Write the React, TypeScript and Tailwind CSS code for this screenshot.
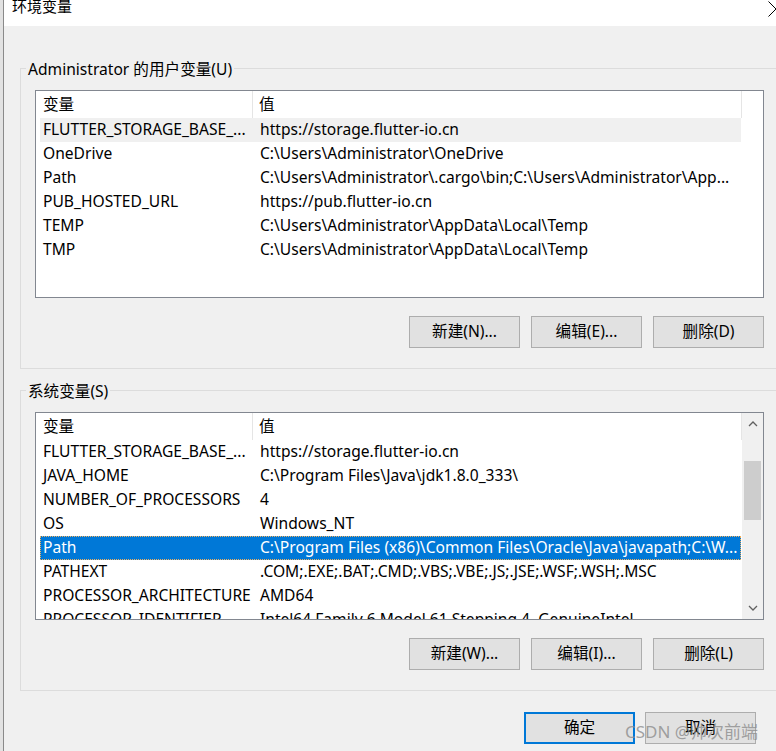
import React from "react";

type Row = [string, string];

const userRows: Row[] = [
  ["FLUTTER_STORAGE_BASE_...", "https://storage.flutter-io.cn"],
  ["OneDrive", "C:\\Users\\Administrator\\OneDrive"],
  ["Path", "C:\\Users\\Administrator\\.cargo\\bin;C:\\Users\\Administrator\\App..."],
  ["PUB_HOSTED_URL", "https://pub.flutter-io.cn"],
  ["TEMP", "C:\\Users\\Administrator\\AppData\\Local\\Temp"],
  ["TMP", "C:\\Users\\Administrator\\AppData\\Local\\Temp"],
];

const sysRows: Row[] = [
  ["FLUTTER_STORAGE_BASE_...", "https://storage.flutter-io.cn"],
  ["JAVA_HOME", "C:\\Program Files\\Java\\jdk1.8.0_333\\"],
  ["NUMBER_OF_PROCESSORS", "4"],
  ["OS", "Windows_NT"],
  ["Path", "C:\\Program Files (x86)\\Common Files\\Oracle\\Java\\javapath;C:\\W..."],
  ["PATHEXT", ".COM;.EXE;.BAT;.CMD;.VBS;.VBE;.JS;.JSE;.WSF;.WSH;.MSC"],
  ["PROCESSOR_ARCHITECTURE", "AMD64"],
  ["PROCESSOR_IDENTIFIER", "Intel64 Family 6 Model 61 Stepping 4, GenuineIntel"],
];

function Chevron({ up }: { up: boolean }) {
  return (
    <svg width="10" height="6" viewBox="0 0 10 6">
      <polyline
        points={up ? "1,5 5,1 9,5" : "1,1 5,5 9,1"}
        fill="none"
        stroke="#606060"
        strokeWidth="1.3"
      />
    </svg>
  );
}

function ListView({
  rows,
  hover,
  selected,
  scrollbar,
}: {
  rows: Row[];
  hover?: number;
  selected?: number;
  scrollbar?: boolean;
}) {
  return (
    <div className="w-[729px] h-[208px] border border-[#828790] bg-white flex overflow-hidden">
      <div className="w-[706px] flex flex-col shrink-0">
        <div className="h-[27px] flex shrink-0">
          <div className="w-[217px] border-r border-[#e5e5e5] pl-[7px] flex items-center">变量</div>
          <div className="flex-1 border-r border-[#e5e5e5] pl-[6px] flex items-center">值</div>
        </div>
        {rows.map((r, i) => {
          const isSel = i === selected;
          const isHover = i === hover;
          return (
            <div
              key={i}
              className={
                "ml-[4px] w-[701px] h-[24px] shrink-0 flex items-center whitespace-nowrap " +
                (isSel
                  ? "bg-[#0078d7] text-white outline outline-1 outline-dotted outline-[#f0b060] -outline-offset-1"
                  : isHover
                  ? "bg-[#f0f0f0]"
                  : "")
              }
            >
              <div className="w-[213px] pl-[3px] overflow-hidden shrink-0">{r[0]}</div>
              <div className="flex-1 pl-[7px] overflow-hidden">{r[1]}</div>
            </div>
          );
        })}
      </div>
      {scrollbar ? (
        <div className="w-[21px] bg-[#f0f0f0] flex flex-col shrink-0">
          <div className="h-[22px] flex items-center justify-center">
            <Chevron up />
          </div>
          <div className="flex-1 px-[2px]">
            <div className="mt-[26px] h-[59px] bg-[#cdcdcd]" />
          </div>
          <div className="h-[22px] flex items-center justify-center">
            <Chevron up={false} />
          </div>
        </div>
      ) : (
        <div className="flex-1" />
      )}
    </div>
  );
}

function Btn({ label, primary }: { label: string; primary?: boolean }) {
  return (
    <div
      className={
        "w-[111px] h-[32px] bg-[#e1e1e1] flex items-center justify-center " +
        (primary ? "border-2 border-[#0078d7]" : "border border-[#adadad]")
      }
    >
      {label}
    </div>
  );
}

function Group({
  legend,
  children,
  className,
}: {
  legend: string;
  children: React.ReactNode;
  className?: string;
}) {
  return (
    <div className={"relative ml-[16px] w-[790px] border border-[#dcdcdc] pt-[21px] pb-[20px] pl-[14px] " + (className || "")}>
      <div className="absolute left-[5px] top-0 -translate-y-1/2 bg-[#f0f0f0] px-[2px] leading-[20px]">
        {legend}
      </div>
      {children}
    </div>
  );
}

export default function App() {
  return (
    <div
      className="w-[776px] h-[751px] flex overflow-hidden text-[15.6px] text-black"
      style={{ fontFamily: '"Noto Sans", "Noto Sans CJK SC", sans-serif' }}
    >
      <div className="w-[3px] bg-[#e2e2e2] border-r border-[#8a8a8a] box-content shrink-0" />
      <div className="relative flex-1 flex flex-col bg-[#f0f0f0] overflow-hidden">
        <div className="h-[26px] bg-white shrink-0 pl-[8px] relative">
          <div className="leading-[14px] -mt-[1px] text-[15px]">环境变量</div>
          <svg className="absolute right-[-8px] top-[1px]" width="16" height="16" viewBox="0 0 16 16">
            <line x1="0.5" y1="0.5" x2="15.5" y2="15.5" stroke="#000" strokeWidth="1" />
            <line x1="0.5" y1="15.5" x2="15.5" y2="0.5" stroke="#000" strokeWidth="1" />
          </svg>
        </div>

        <Group legend="Administrator 的用户变量(U)" className="mt-[42px]">
          <ListView rows={userRows} hover={0} />
          <div className="mt-[18px] w-[729px] flex justify-end gap-[11px]">
            <Btn label="新建(N)..." />
            <Btn label="编辑(E)..." />
            <Btn label="删除(D)" />
          </div>
        </Group>

        <Group legend="系统变量(S)" className="mt-[21px]">
          <ListView rows={sysRows} selected={4} scrollbar />
          <div className="mt-[18px] w-[729px] flex justify-end gap-[11px]">
            <Btn label="新建(W)..." />
            <Btn label="编辑(I)..." />
            <Btn label="删除(L)" />
          </div>
        </Group>

        <div className="mt-[21px] flex justify-end gap-[10px] pr-[20px]">
          <Btn label="确定" primary />
          <Btn label="取消" />
        </div>

        <div className="absolute left-[621px] top-[721px] text-[17px] leading-[22px] text-[#8c8c8c]/80 whitespace-nowrap">
          CSDN @帅次前端
        </div>
      </div>
    </div>
  );
}
